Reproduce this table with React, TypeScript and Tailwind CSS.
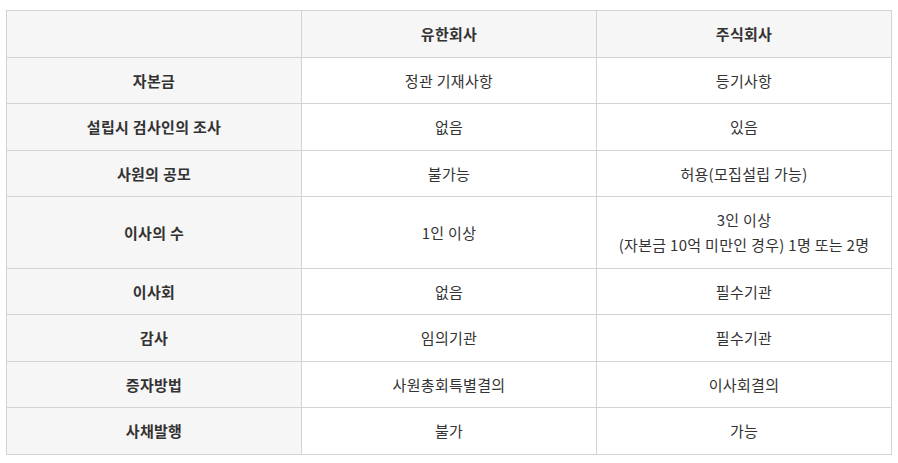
const rows: { label: string; llc: string; corp: string[] }[] = [
  { label: "자본금", llc: "정관 기재사항", corp: ["등기사항"] },
  { label: "설립시 검사인의 조사", llc: "없음", corp: ["있음"] },
  { label: "사원의 공모", llc: "불가능", corp: ["허용(모집설립 가능)"] },
  { label: "이사의 수", llc: "1인 이상", corp: ["3인 이상", "(자본금 10억 미만인 경우) 1명 또는 2명"] },
  { label: "이사회", llc: "없음", corp: ["필수기관"] },
  { label: "감사", llc: "임의기관", corp: ["필수기관"] },
  { label: "증자방법", llc: "사원총회특별결의", corp: ["이사회결의"] },
  { label: "사채발행", llc: "불가", corp: ["가능"] },
];

const cell = "border border-[#d3d3d3] px-3 py-[10.25px] text-center align-middle leading-[25px]";

export default function App() {
  return (
    <div
      className="bg-white pl-[6px] pt-[10px] w-[898px] h-[463px] text-[15px] tracking-[0.3px] text-[#333]"
      style={{ fontFamily: '"Noto Sans CJK KR", "Noto Sans", sans-serif' }}
    >
      <table className="w-[886px] table-fixed border-collapse">
        <thead>
          <tr className="bg-[#f6f6f6]">
            <th className={`${cell} font-bold`}></th>
            <th className={`${cell} font-bold`}>유한회사</th>
            <th className={`${cell} font-bold`}>주식회사</th>
          </tr>
        </thead>
        <tbody>
          {rows.map((r) => (
            <tr key={r.label}>
              <td className={`${cell} bg-[#f6f6f6] font-bold`}>{r.label}</td>
              <td className={cell}>{r.llc}</td>
              <td className={cell}>
                {r.corp.map((line) => (
                  <div key={line}>{line}</div>
                ))}
              </td>
            </tr>
          ))}
        </tbody>
      </table>
    </div>
  );
}
